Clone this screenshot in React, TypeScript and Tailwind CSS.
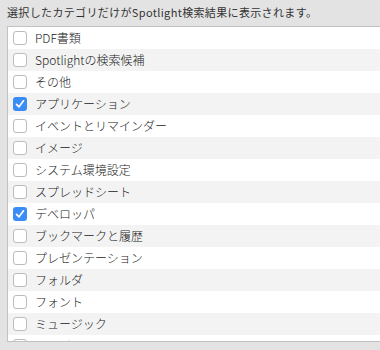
const items = [
  { label: "PDF書類", checked: false },
  { label: "Spotlightの検索候補", checked: false },
  { label: "その他", checked: false },
  { label: "アプリケーション", checked: true },
  { label: "イベントとリマインダー", checked: false },
  { label: "イメージ", checked: false },
  { label: "システム環境設定", checked: false },
  { label: "スプレッドシート", checked: false },
  { label: "デベロッパ", checked: true },
  { label: "ブックマークと履歴", checked: false },
  { label: "プレゼンテーション", checked: false },
  { label: "フォルダ", checked: false },
  { label: "フォント", checked: false },
  { label: "ミュージック", checked: false },
  { label: "ムービー", checked: false },
];

function Checkbox({ checked }: { checked: boolean }) {
  if (checked) {
    return (
      <span className="flex h-[14px] w-[14px] shrink-0 items-center justify-center rounded-[3px] bg-[#3a8cf6]">
        <svg viewBox="0 0 14 14" className="h-[14px] w-[14px]">
          <path d="M3.5 7.3 L6 9.8 L10.5 3.8" fill="none" stroke="white" strokeWidth="1.7" strokeLinecap="round" strokeLinejoin="round" />
        </svg>
      </span>
    );
  }
  return <span className="h-[14px] w-[14px] shrink-0 rounded-[3px] border border-[#bcbcbc] bg-white" />;
}

export default function App() {
  return (
    <div
      className="h-[350px] w-[380px] overflow-hidden bg-[#e3e3e3]"
      style={{ fontFamily: '"Noto Sans CJK JP", "Liberation Sans", sans-serif' }}
    >
      <p className="h-[26px] pl-[7px] pt-[4px] text-[11px] leading-[16px] tracking-[0.35px] text-[#333]">
        選択したカテゴリだけがSpotlight検索結果に表示されます。
      </p>
      <div className="ml-[7px] h-[316px] w-[390px] overflow-hidden border border-[#c2c2c2] bg-white">
        {items.map((item, i) => (
          <div
            key={item.label}
            className={`flex h-[22px] items-center gap-[8px] pl-[5px] ${i % 2 === 1 ? "bg-[#f3f3f3]" : "bg-white"}`}
          >
            <Checkbox checked={item.checked} />
            <span className="text-[12px] font-light leading-none text-[#222]">{item.label}</span>
          </div>
        ))}
      </div>
    </div>
  );
}
